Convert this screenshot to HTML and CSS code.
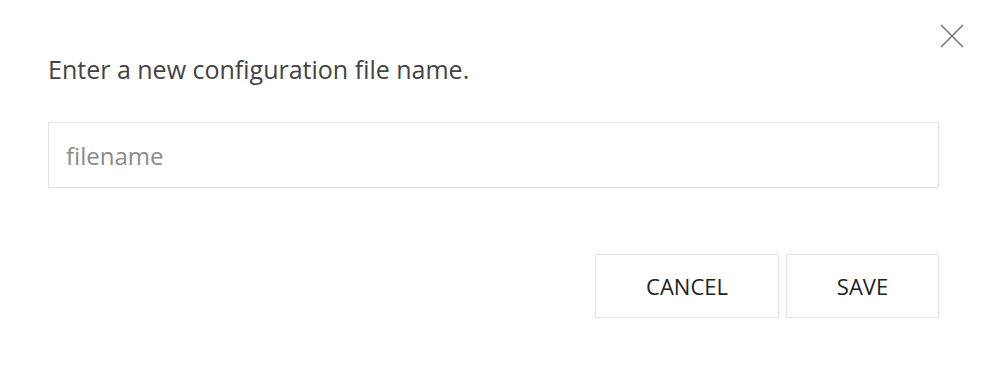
FILE: index.html
```html
<!DOCTYPE html>
<html lang="en">
<head>
    <meta charset="UTF-8">
    <title>New configuration</title>
    <link rel="stylesheet" href="styles.css">
</head>
<body>
    <div class="dialog">
        <button class="close-button" aria-label="Close">
            <svg width="24" height="24" viewBox="0 0 24 24">
                <path d="M1 1 L23 23 M23 1 L1 23" stroke="#6f6f6f" stroke-width="1.4" fill="none"/>
            </svg>
        </button>
        <p class="dialog-text">Enter a new configuration file name.</p>
        <input class="name-input" type="text" placeholder="filename">
        <div class="dialog-actions">
            <button class="action-button cancel-button">CANCEL</button>
            <button class="action-button save-button">SAVE</button>
        </div>
    </div>
</body>
</html>
```

FILE: styles.css
```css
/* General page */
body {
    margin: 0;
    padding: 0;
    background: #ffffff;
    font-family: "Open Sans", "Noto Sans", Arial, sans-serif;
}

/* Dialog box */
.dialog {
    position: relative;
    padding: 48px 49px 0 48px;
}

.close-button {
    position: absolute;
    top: 24px;
    right: 24px;
    padding: 0;
    border: none;
    background: none;
    cursor: pointer;
    line-height: 0;
}

.dialog-text {
    margin: 0;
    font-size: 25px;
    line-height: 42px;
    color: #444444;
}

/* Text field */
.name-input {
    display: block;
    box-sizing: border-box;
    width: 100%;
    height: 66px;
    margin-top: 32px;
    padding: 0 17px;
    border: 1px solid #e3e3e3;
    font-family: inherit;
    font-size: 24px;
    color: #333333;
    outline: none;
}

.name-input::placeholder {
    color: #8a8a8a;
}

/* Buttons */
.dialog-actions {
    display: flex;
    justify-content: flex-end;
    gap: 7px;
    margin-top: 66px;
}

.action-button {
    height: 64px;
    border: 1px solid #e3e3e3;
    background: #ffffff;
    font-family: inherit;
    font-size: 22px;
    color: #222222;
    cursor: pointer;
}

.cancel-button {
    width: 184px;
}

.save-button {
    width: 153px;
}
```
